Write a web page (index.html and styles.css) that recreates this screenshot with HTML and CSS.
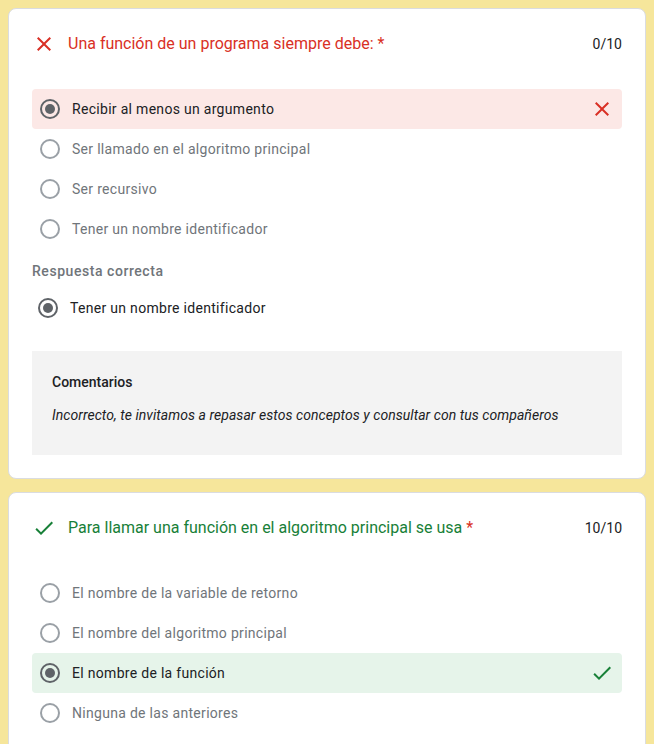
FILE: index.html
```html
<!DOCTYPE html>
<html lang="es">
<head>
<meta charset="utf-8">
<title>Cuestionario</title>
<link rel="stylesheet" href="styles.css">
</head>
<body>
<div class="page">
  <section class="card">
    <div class="q-header">
      <svg class="q-icon" viewBox="0 0 24 24" width="24" height="24"><path fill="#d93025" d="M19 6.41L17.59 5 12 10.59 6.41 5 5 6.41 10.59 12 5 17.59 6.41 19 12 13.41 17.59 19 19 17.59 13.41 12z"/></svg>
      <div class="q-title wrong">Una función de un programa siempre debe: <span class="req">*</span></div>
      <div class="q-score">0/10</div>
    </div>
    <div class="options">
      <div class="option sel wrong-bg">
        <span class="radio on"></span>
        <span class="opt-text">Recibir al menos un argumento</span>
        <svg class="opt-mark" viewBox="0 0 24 24" width="24" height="24"><path fill="#d93025" d="M19 6.41L17.59 5 12 10.59 6.41 5 5 6.41 10.59 12 5 17.59 6.41 19 12 13.41 17.59 19 19 17.59 13.41 12z"/></svg>
      </div>
      <div class="option">
        <span class="radio"></span>
        <span class="opt-text">Ser llamado en el algoritmo principal</span>
      </div>
      <div class="option">
        <span class="radio"></span>
        <span class="opt-text">Ser recursivo</span>
      </div>
      <div class="option">
        <span class="radio"></span>
        <span class="opt-text">Tener un nombre identificador</span>
      </div>
    </div>
    <div class="correct-label">Respuesta correcta</div>
    <div class="correct-row">
      <span class="radio on"></span>
      <span class="opt-text dark">Tener un nombre identificador</span>
    </div>
    <div class="feedback">
      <div class="fb-title">Comentarios</div>
      <div class="fb-text">Incorrecto, te invitamos a repasar estos conceptos y consultar con tus compañeros</div>
    </div>
  </section>

  <section class="card">
    <div class="q-header">
      <svg class="q-icon" viewBox="0 0 24 24" width="24" height="24"><path fill="#188038" d="M9 16.17L4.83 12l-1.42 1.41L9 19 21 7l-1.41-1.41z"/></svg>
      <div class="q-title right">Para llamar una función en el algoritmo principal se usa <span class="req">*</span></div>
      <div class="q-score">10/10</div>
    </div>
    <div class="options">
      <div class="option">
        <span class="radio"></span>
        <span class="opt-text">El nombre de la variable de retorno</span>
      </div>
      <div class="option">
        <span class="radio"></span>
        <span class="opt-text">El nombre del algoritmo principal</span>
      </div>
      <div class="option sel right-bg">
        <span class="radio on"></span>
        <span class="opt-text">El nombre de la función</span>
        <svg class="opt-mark" viewBox="0 0 24 24" width="24" height="24"><path fill="#188038" d="M9 16.17L4.83 12l-1.42 1.41L9 19 21 7l-1.41-1.41z"/></svg>
      </div>
      <div class="option">
        <span class="radio"></span>
        <span class="opt-text">Ninguna de las anteriores</span>
      </div>
    </div>
  </section>
</div>
</body>
</html>
```

FILE: styles.css
```css
html, body {
  margin: 0;
  padding: 0;
}
body {
  background: #f6e69b;
  font-family: Roboto, "Noto Sans", Arial, sans-serif;
  color: #202124;
}
.page {
  padding: 8px;
  display: flex;
  flex-direction: column;
  gap: 13px;
}
.card {
  background: #fff;
  border: 1px solid #dadce0;
  border-radius: 8px;
  padding: 23px 23px 23px;
}
.q-header {
  display: flex;
  align-items: center;
  height: 24px;
}
.q-icon {
  flex: none;
  margin-right: 12px;
}
.q-title {
  flex: 1;
  font-size: 16px;
  line-height: 24px;
}
.q-title.wrong { color: #d93025; }
.q-title.right { color: #188038; }
.req { color: #d93025; }
.q-score {
  font-size: 14px;
  color: #202124;
}
.options {
  margin-top: 33px;
  display: flex;
  flex-direction: column;
}
.option {
  display: flex;
  align-items: center;
  height: 40px;
  padding: 0 8px;
  border-radius: 4px;
}
.wrong-bg { background: #fce8e6; }
.right-bg { background: #e6f4ea; }
.radio {
  flex: none;
  box-sizing: border-box;
  width: 20px;
  height: 20px;
  border: 2px solid #9aa0a6;
  border-radius: 50%;
  display: flex;
  align-items: center;
  justify-content: center;
  margin-right: 12px;
}
.radio.on {
  border-color: #5f6368;
}
.radio.on::after {
  content: "";
  width: 10px;
  height: 10px;
  border-radius: 50%;
  background: #5f6368;
}
.opt-text {
  flex: 1;
  font-size: 14px;
  letter-spacing: 0.3px;
  color: #70757a;
}
.option.sel .opt-text, .opt-text.dark {
  color: #202124;
}
.opt-mark { flex: none; }
.correct-label {
  margin-top: 12px;
  font-size: 14px;
  line-height: 20px;
  font-weight: 500;
  color: #70757a;
  letter-spacing: 0.55px;
}
.correct-row {
  display: flex;
  align-items: center;
  height: 34px;
  margin-top: 10px;
  padding-left: 6px;
}
.feedback {
  margin-top: 26px;
  background: #f3f3f3;
  padding: 20px 20px 29px;
}
.fb-title {
  font-size: 14px;
  font-weight: 500;
  line-height: 22px;
}
.fb-text {
  margin-top: 11px;
  font-size: 14px;
  font-style: italic;
  letter-spacing: 0.05px;
  line-height: 22px;
}
```
